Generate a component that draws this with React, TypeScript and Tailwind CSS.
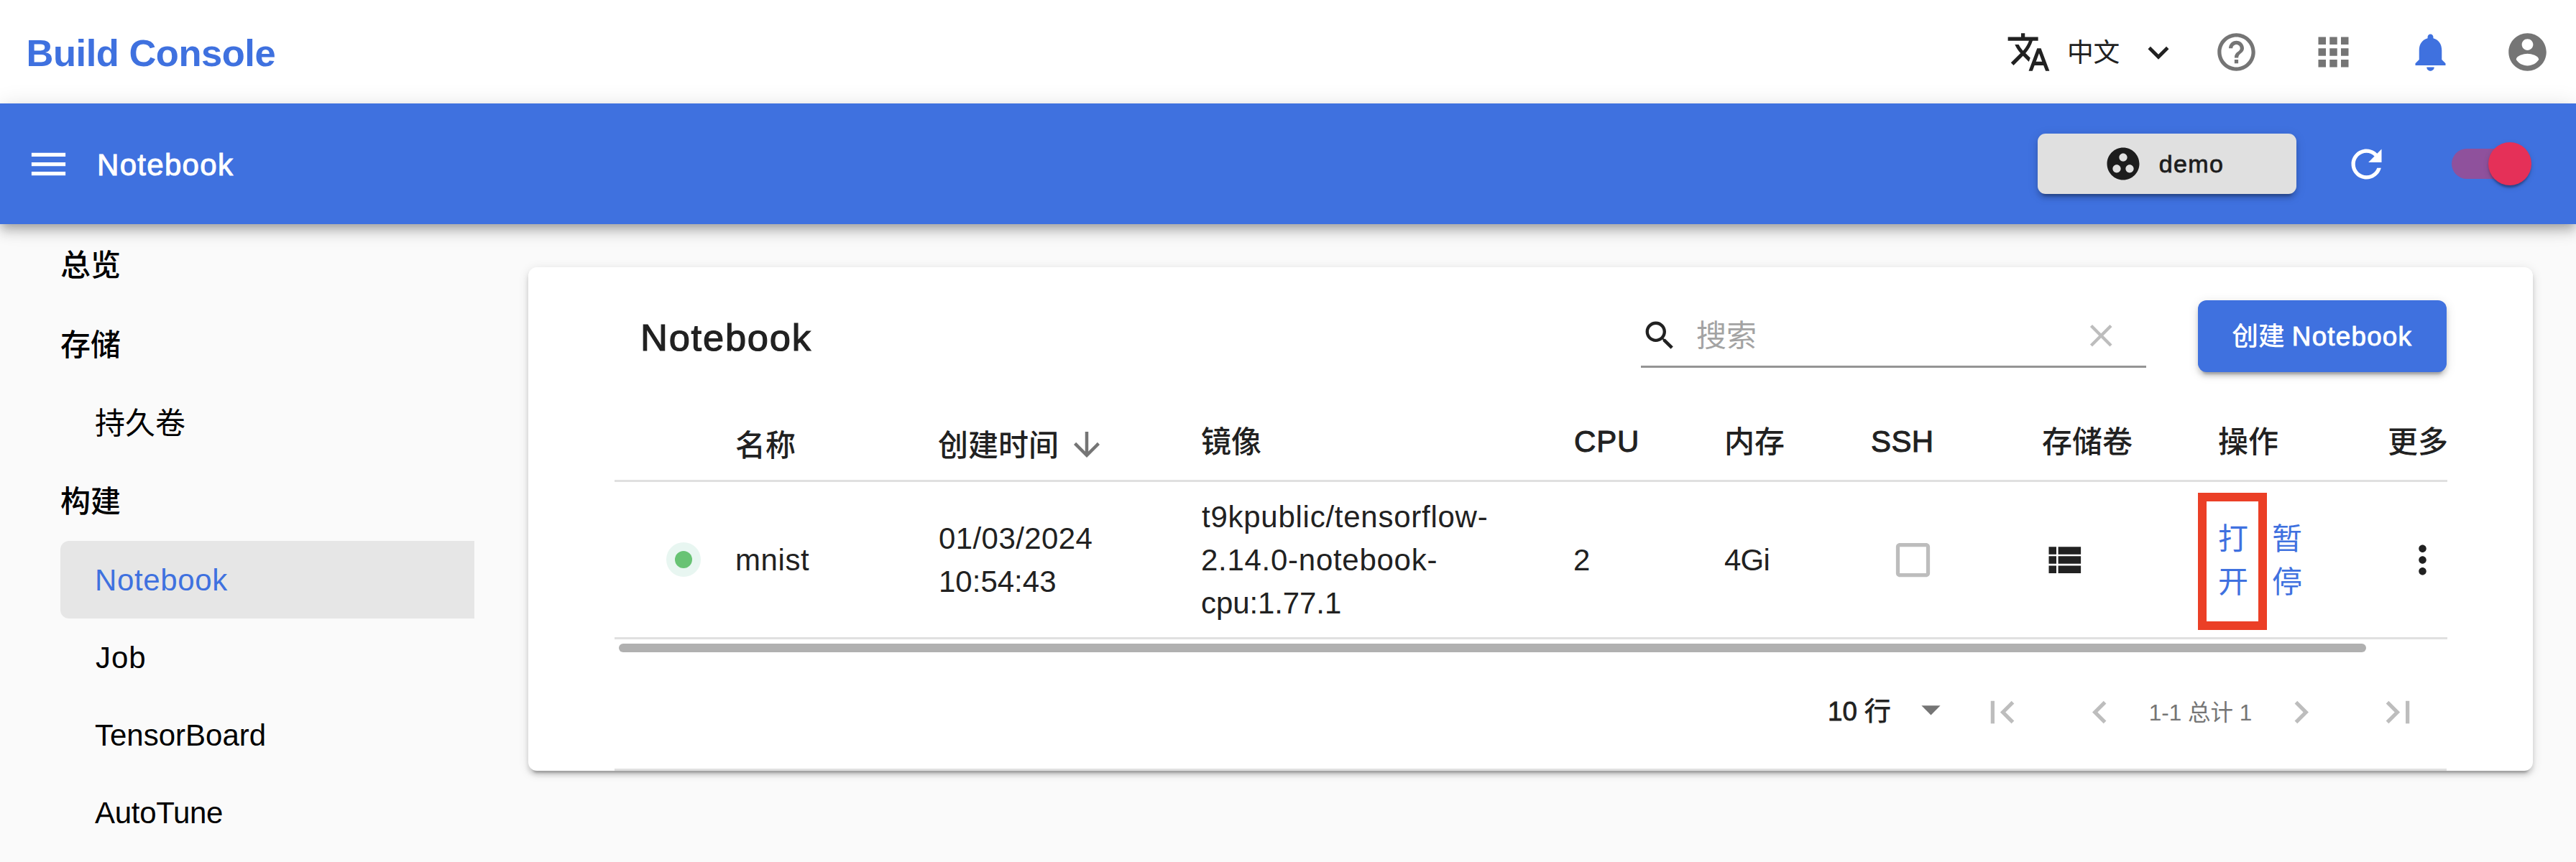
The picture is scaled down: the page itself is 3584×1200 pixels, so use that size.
import React from "react";

const PATHS = {
  translate:
    "M12.87 15.07l-2.54-2.51.03-.03c1.74-1.94 2.98-4.17 3.71-6.53H17V4h-7V2H8v2H1v1.99h11.17C11.5 7.92 10.44 9.75 9 11.35 8.07 10.32 7.3 9.19 6.69 8h-2c.73 1.63 1.73 3.17 2.98 4.56l-5.09 5.02L4 19l5-5 3.11 3.11.76-2.04zM18.5 10h-2L12 22h2l1.12-3h4.75L21 22h2l-4.5-12zm-2.62 7l1.62-4.33L19.12 17h-3.24z",
  expandMore: "M16.59 8.59L12 13.17 7.41 8.59 6 10l6 6 6-6z",
  help: "M11 18h2v-2h-2v2zm1-16C6.48 2 2 6.48 2 12s4.48 10 10 10 10-4.48 10-10S17.52 2 12 2zm0 18c-4.41 0-8-3.59-8-8s3.59-8 8-8 8 3.59 8 8-3.59 8-8 8zm0-14c-2.21 0-4 1.79-4 4h2c0-1.1.9-2 2-2s2 .9 2 2c0 2-3 1.75-3 5h2c0-2.25 3-2.5 3-5 0-2.21-1.79-4-4-4z",
  apps: "M4 8h4V4H4v4zm6 12h4v-4h-4v4zm-6 0h4v-4H4v4zm0-6h4v-4H4v4zm6 0h4v-4h-4v4zm6-10v4h4V4h-4zm-6 4h4V4h-4v4zm6 6h4v-4h-4v4zm0 6h4v-4h-4v4z",
  bell: "M12 22c1.1 0 2-.9 2-2h-4c0 1.1.89 2 2 2zm6-6v-5c0-3.07-1.64-5.64-4.5-6.32V4c0-.83-.67-1.5-1.5-1.5s-1.5.67-1.5 1.5v.68C7.63 5.36 6 7.92 6 11v5l-2 2v1h16v-1l-2-2z",
  account:
    "M12 2C6.48 2 2 6.48 2 12s4.48 10 10 10 10-4.48 10-10S17.52 2 12 2zm0 3c1.66 0 3 1.34 3 3s-1.34 3-3 3-3-1.34-3-3 1.34-3 3-3zm0 14.2c-2.5 0-4.71-1.28-6-3.22.03-1.99 4-3.08 6-3.08 1.99 0 5.97 1.09 6 3.08-1.29 1.94-3.5 3.22-6 3.22z",
  menu: "M3 18h18v-2H3v2zm0-5h18v-2H3v2zm0-7v2h18V6H3z",
  group:
    "M12 2C6.48 2 2 6.48 2 12s4.48 10 10 10 10-4.48 10-10S17.52 2 12 2zM8 17.5c-1.38 0-2.5-1.12-2.5-2.5s1.12-2.5 2.5-2.5 2.5 1.12 2.5 2.5-1.12 2.5-2.5 2.5zM9.5 8c0-1.38 1.12-2.5 2.5-2.5s2.5 1.12 2.5 2.5-1.12 2.5-2.5 2.5S9.5 9.38 9.5 8zm6.5 9.5c-1.38 0-2.5-1.12-2.5-2.5s1.12-2.5 2.5-2.5 2.5 1.12 2.5 2.5-1.12 2.5-2.5 2.5z",
  refresh:
    "M17.65 6.35C16.2 4.9 14.21 4 12 4c-4.42 0-7.99 3.58-7.99 8s3.57 8 7.99 8c3.73 0 6.84-2.55 7.73-6h-2.08c-.82 2.33-3.04 4-5.65 4-3.31 0-6-2.69-6-6s2.69-6 6-6c1.66 0 3.14.69 4.22 1.78L13 11h7V4l-2.35 2.35z",
  search:
    "M15.5 14h-.79l-.28-.27C15.41 12.59 16 11.11 16 9.5 16 5.91 13.09 3 9.5 3S3 5.91 3 9.5 5.91 16 9.5 16c1.61 0 3.09-.59 4.23-1.57l.27.28v.79l5 4.99L20.49 19l-4.99-5zm-6 0C7.01 14 5 11.99 5 9.5S7.01 5 9.5 5 14 7.01 14 9.5 11.99 14 9.5 14z",
  clear:
    "M19 6.41L17.59 5 12 10.59 6.41 5 5 6.41 10.59 12 5 17.59 6.41 19 12 13.41 17.59 19 19 17.59 13.41 12z",
  arrowDown: "M20 12l-1.41-1.41L13 16.17V4h-2v12.17l-5.58-5.59L4 12l8 8 8-8z",
  viewList: "M4 14h4v-4H4v4zm0 5h4v-4H4v4zM4 9h4V5H4v4zm5 5h12v-4H9v4zm0 5h12v-4H9v4zM9 5v4h12V5H9z",
  more: "M12 8c1.1 0 2-.9 2-2s-.9-2-2-2-2 .9-2 2 .9 2 2 2zm0 2c-1.1 0-2 .9-2 2s.9 2 2 2 2-.9 2-2-.9-2-2-2zm0 6c-1.1 0-2 .9-2 2s.9 2 2 2 2-.9 2-2-.9-2-2-2z",
  checkbox: "M19 5v14H5V5h14m0-2H5c-1.1 0-2 .9-2 2v14c0 1.1.9 2 2 2h14c1.1 0 2-.9 2-2V5c0-1.1-.9-2-2-2z",
  dropDown: "M7 10l5 5 5-5z",
  firstPage: "M18.41 16.59L13.82 12l4.59-4.59L17 6l-6 6 6 6zM6 6h2v12H6z",
  prev: "M15.41 7.41L14 6l-6 6 6 6 1.41-1.41L10.83 12z",
  next: "M10 6L8.59 7.41 13.17 12l-4.58 4.59L10 18l6-6z",
  lastPage: "M5.59 7.41L10.18 12l-4.59 4.59L7 18l6-6-6-6zM16 6h2v12h-2z",
};

function Icon({ name, className = "" }: { name: keyof typeof PATHS; className?: string }) {
  return (
    <svg viewBox="0 0 24 24" fill="currentColor" className={`block shrink-0 ${className || "size-[63px]"}`}>
      <path d={PATHS[name]} />
    </svg>
  );
}

function TopBar() {
  return (
    <header className="flex h-36 items-center justify-between bg-white pr-[36px] pl-[36.5px]">
      <h1 className="pt-[3px] text-[52.5px] leading-[60px] font-bold tracking-[-0.48px] text-[#3f71df]">Build Console</h1>
      <div className="flex items-center pt-px text-[#757575]">
        <div className="flex items-center text-[#212121]">
          <Icon name="translate" className="-ml-px size-[63px]" />
          <span className="ml-[22px] w-[98px] pt-[3px] text-[36.75px] leading-[60px] tracking-[-0.25px]">中文</span>
          <Icon name="expandMore" className="size-[58px]" />
        </div>
        <div className="ml-12 flex gap-[72px]">
          <Icon name="help" />
          <Icon name="apps" />
          <Icon name="bell" className="size-[63px] text-[#3f71df]" />
          <Icon name="account" />
        </div>
      </div>
    </header>
  );
}

function AppBar() {
  return (
    <div className="relative z-10 flex h-[168px] items-center justify-between bg-[#3f71df] pr-[71px] pl-9 text-white shadow-[0_6px_12px_-3px_rgba(0,0,0,0.2),0_12px_15px_0_rgba(0,0,0,0.14),0_3px_30px_0_rgba(0,0,0,0.12)]">
      <div className="flex items-center gap-9">
        <Icon name="menu" />
        <span className="pt-[3px] text-[42px] leading-[60px] tracking-[1.3px] [-webkit-text-stroke:1px]">Notebook</span>
      </div>
      <div className="flex items-center">
        <button className="flex h-[84px] w-[360px] items-center justify-center gap-[23px] rounded-[11px] bg-[#e0e0e0] pr-[9px] text-[#1d1d1d] shadow-[0_9px_3px_-6px_rgba(0,0,0,0.2),0_6px_6px_0_rgba(0,0,0,0.14),0_3px_15px_0_rgba(0,0,0,0.12)]">
          <Icon name="group" className="size-[54px]" />
          <span className="text-[34px] leading-[60px] tracking-[1.4px] [-webkit-text-stroke:0.8px]">demo</span>
        </button>
        <Icon name="refresh" className="ml-[66px] size-[63px]" />
        <div className="ml-[87px] flex h-[42px] w-[102px] items-center rounded-full bg-[#8f519c]">
          <div className="-mr-[9px] ml-auto size-[60px] shrink-0 rounded-full bg-[#e53058] shadow-[0_6px_3px_-3px_rgba(0,0,0,0.2),0_3px_3px_0_rgba(0,0,0,0.14),0_3px_9px_0_rgba(0,0,0,0.12)]" />
        </div>
      </div>
    </div>
  );
}

function Sidebar() {
  return (
    <nav className="flex w-[660px] shrink-0 flex-col pl-[84px] text-[42px] text-black">
      <div className="h-28 font-medium leading-[115px]">总览</div>
      <div className="h-[111px] font-medium leading-[114px]">存储</div>
      <div className="h-[107px] pl-12 leading-[109px]">持久卷</div>
      <div className="h-[111px] font-medium leading-[114px]">构建</div>
      <div className="h-[108px] rounded-l-[12px] bg-[#e6e6e6] pl-12 leading-[109px] tracking-[0.63px] text-[#3f71df]">Notebook</div>
      <div className="h-[108px] pl-[49px] leading-[109px] tracking-[1px]">Job</div>
      <div className="h-[108px] pl-[48px] leading-[109px]">TensorBoard</div>
      <div className="h-[108px] pl-12 leading-[110px] tracking-[-0.3px]">AutoTune</div>
    </nav>
  );
}

function Toolbar() {
  return (
    <div className="flex h-[196px] items-start pt-[46px] pl-9 text-[#212121]">
      <h2 className="text-[52.5px] leading-[103px] tracking-[1.75px] [-webkit-text-stroke:1.2px]">Notebook</h2>
      <div className="ml-auto flex h-[94px] w-[703px] items-center border-b-[3px] border-[#949494] pt-2 pr-9">
        <Icon name="search" className="size-[52.5px]" />
        <span className="ml-[25px] flex-1 text-[42px] leading-[60px] text-[#a3a3a3]">搜索</span>
        <Icon name="clear" className="size-[52.5px] text-[#bdbdbd]" />
      </div>
      <button className="ml-[72px] h-[100px] w-[346.5px] rounded-[12px] bg-[#3f71df] text-[36.75px] leading-[102px] text-white shadow-[0_9px_3px_-6px_rgba(0,0,0,0.2),0_6px_6px_0_rgba(0,0,0,0.14),0_3px_15px_0_rgba(0,0,0,0.12)]">
        <span className="font-medium">创建</span>
        <span className="ml-2.5 tracking-[1.25px] [-webkit-text-stroke:0.9px]">Notebook</span>
      </button>
    </div>
  );
}

const COLS =
  "grid w-[2550px] grid-cols-[167px_283px_366px_518px_210px_202px_240px_245px_238px_81px] border-b-[3px] border-[#e0e0e0] overflow-hidden";

function Table() {
  return (
    <div className="text-[42px] leading-[60px] text-[#212121]">
      <div className={`${COLS} h-[103px] items-start pt-[17px] font-medium whitespace-nowrap`}>
        <span />
        <span className="mt-1.5 pl-px">名称</span>
        <span className="mt-1.5 flex items-center">
          创建时间
          <Icon name="arrowDown" className="-mt-1 ml-3 size-[54px] text-[#757575]" />
        </span>
        <span className="mt-px">镜像</span>
        <span className="pl-px tracking-[0.8px] [-webkit-text-stroke:1px]">CPU</span>
        <span className="mt-px">内存</span>
        <span className="pl-[2px] tracking-[0.4px] [-webkit-text-stroke:1px]">SSH</span>
        <span className="mt-px">存储卷</span>
        <span className="mt-px">操作</span>
        <span className="mt-px -ml-0.5">更多</span>
      </div>
      <div className={`${COLS} h-[219px] items-center`}>
        <span className="ml-[72px] flex size-12 items-center justify-center rounded-full bg-[#e8f6f1]">
          <span className="size-6 rounded-full bg-[#68c374]" />
        </span>
        <span className="pt-0.5 pl-px tracking-[0.58px]">mnist</span>
        <span className="pt-0.5">
          <span className="block pl-px tracking-[0.41px]">01/03/2024</span>
          <span className="block pl-px">10:54:43</span>
        </span>
        <span className="pt-0.5">
          <span className="block pl-px tracking-[0.74px]">t9kpublic/tensorflow-</span>
          <span className="block tracking-[0.72px]">2.14.0-notebook-</span>
          <span className="block tracking-[-0.1px]">cpu:1.77.1</span>
        </span>
        <span className="pt-0.5">2</span>
        <span className="pt-0.5 tracking-[-0.8px]">4Gi</span>
        <Icon name="checkbox" className="ml-[29px] size-[63px] text-[#bdbdbd]" />
        <Icon name="viewList" className="-ml-px size-[63px]" />
        <span className="relative flex gap-[33px] pt-1 text-[#3f71df]">
          <span className="w-[42px]">打开</span>
          <span className="w-[42px]">暂停</span>
          <span className="absolute -top-[31px] -left-7 h-[191px] w-24 border-12 border-[#eb3f26]" />
        </span>
        <Icon name="more" className="ml-[15px] size-[63px]" />
      </div>
    </div>
  );
}

function Pagination() {
  return (
    <div className="flex h-[165px] items-center justify-end border-b-[3px] border-[#e0e0e0] pt-1 pr-9 text-[#bdbdbd]">
      <span className="w-[112px] text-[36.75px] leading-[60px] whitespace-nowrap text-[#212121] [-webkit-text-stroke:0.8px]">10 行</span>
      <Icon name="dropDown" className="-mt-2 size-[63px] text-[#757575]" />
      <Icon name="firstPage" className="ml-9 size-[63px]" />
      <Icon name="prev" className="ml-[73px] size-[63px]" />
      <span className="w-[217px] pt-px text-center text-[31.5px] leading-[60px] text-[#757575]">1-1 总计 1</span>
      <Icon name="next" />
      <Icon name="lastPage" className="ml-[72px] size-[63px]" />
    </div>
  );
}

export default function App() {
  return (
    <div className="h-[1200px] w-[3584px] overflow-hidden bg-[#fafafa] font-['Liberation_Sans','Noto_Sans_CJK_SC',sans-serif]">
      <TopBar />
      <AppBar />
      <div className="flex">
        <Sidebar />
        <main className="mt-[60px] ml-[75px] h-[701px] w-[2789px] rounded-[12px] bg-white px-[120px] shadow-[0_9px_3px_-6px_rgba(0,0,0,0.2),0_6px_6px_0_rgba(0,0,0,0.14),0_3px_15px_0_rgba(0,0,0,0.12)]">
          <Toolbar />
          <Table />
          <div className="mt-1.5 ml-1.5 h-3 w-[2431px] rounded-full bg-[#b0b0b0]" />
          <Pagination />
        </main>
      </div>
    </div>
  );
}
